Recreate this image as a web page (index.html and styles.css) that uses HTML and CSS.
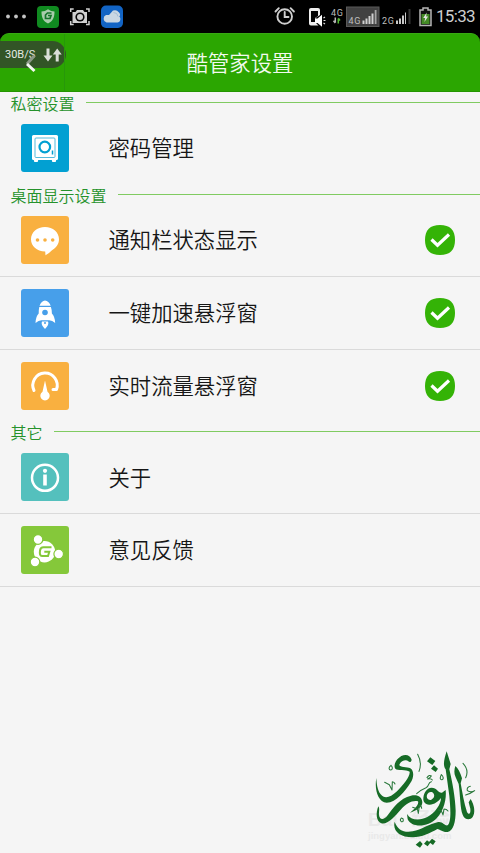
FILE: index.html
```html
<!DOCTYPE html>
<html lang="zh-CN">
<head>
<meta charset="utf-8">
<title>酷管家设置</title>
<link rel="stylesheet" href="styles.css">
</head>
<body>
<div class="statusbar">
  <svg class="status-icons" width="436" height="33" viewBox="0 0 436 33">
    <g fill="#c4c4c4"><circle cx="8" cy="16.5" r="1.9"/><circle cx="16" cy="16.5" r="1.9"/><circle cx="24" cy="16.5" r="1.9"/></g>
    <rect x="37" y="6" width="22" height="22" rx="4" fill="#108a20"/>
    <path d="M41.5 11.5q3.500 0 6.500-2.200q3 2.200 6.500 2.200c0 6-1.500 9.500-6.500 12c-5-2.500-6.500-6-6.500-12z" fill="#a8ccab"/>
    <path d="M51.500 13h-4l-2 2v3.500h4.500l1-3h-3" fill="none" stroke="#14742a" stroke-width="1.700"/>
    <g fill="none" stroke="#d0d0d0" stroke-width="1.500">
      <path d="M70.700 12V9h3M86 9h3v3M70.700 21v3.500h3M86 24.500h3V21"/>
    </g>
    <path d="M72.500 12h3l1.500-2h6l1.500 2h2.500v11H72.500z" fill="#d0d0d0"/>
    <circle cx="80" cy="17" r="4.600" fill="#080808"/><circle cx="80" cy="17" r="3" fill="#d0d0d0"/>
    <rect x="101" y="5.500" width="22" height="22.500" rx="5" fill="#1264c4"/>
    <path d="M106.500 22.500a4 4 0 0 1-.5-7.500h3l4-4.500q4-1 5.500 1.500c2.500 2 1.500 4 .8 4.500c2 2 1 6-1.800 6z" fill="#c9d7e3"/>
    <path d="M113.500 12.500q4 0 4.500 4" fill="none" stroke="#a3bdd4"/>
    <g fill="none" stroke="#cfcfcf" stroke-width="1.900" stroke-linecap="round">
      <circle cx="284.700" cy="16.500" r="7.300"/><path d="M284.700 12v5h3.800M275.500 11.500l3.300-3.300M293.900 11.500l-3.300-3.300"/>
    </g>
    <path d="M311 8h7q2 0 2 2v5l-4.500 3v4.500l3 3H311q-2 0-2-2V10q0-2 2-2z" fill="#eee"/>
    <path d="M311 11h7v5l-3 2v4h-4z" fill="#050505"/>
    <path d="M315 18.500h2.500l4.500-3.800v12l-4.500-3.700H315z" fill="#fff"/>
    <path d="M323.500 18l1.500-1M323.500 20.500h2M323.500 23l1.500 1" stroke="#ddd" stroke-width="1.200"/>
    <text class="net-label" x="331" y="15.500" textLength="12">4G</text>
    <path d="M335.300 17.500v5M333.500 20.800l1.800 2.200" stroke="#b8b8b8" stroke-width="1.500"/>
    <path d="M338.300 23.500v-5M340 20.500l-1.700-2.200" stroke="#56bd34" stroke-width="1.500"/>
    <rect x="346.500" y="7" width="32.500" height="19.500" fill="#414141" stroke="#5a5a5a"/>
    <text class="net-label" x="348.500" y="24" textLength="12">4G</text>
    <g fill="#d0d0d0"><path d="M362.500 20.500h2V24h-2zM365.500 18.500h2V24h-2zM368.500 16h2v8h-2zM371.500 13.500h2V24h-2z"/><path d="M374.700 10h1.800v14h-1.800z" opacity=".7"/></g>
    <text class="net-label" x="382" y="24" textLength="12">2G</text>
    <g fill="#c8c8c8"><path d="M396 20.500h2V24h-2zM399 18.500h2V24h-2zM402 15.500h2V24h-2z"/><path d="M405 12.500h1V24h-1z"/><path d="M408.500 9h2v15h-2z" fill="#343434"/></g>
    <path d="M423 10V8h5v2h3v15.500h-11V10z" fill="#101010" stroke="#b5b5b5" stroke-width="1.500"/>
    <path d="M421.500 14h8v10h-8z" fill="#438a25"/>
    <path d="M426.700 12.500l-3.500 5.500h2l-.8 4l3.700-5.500h-2z" fill="#e4e4e4"/>
  </svg>
  <span class="clock">15:33</span>
</div>

<header class="header">
  <h1 class="title">酷管家设置</h1>
  <svg class="back" width="12" height="20" viewBox="0 0 12 20"><path d="M9.500 1.500L2 10" stroke="#8b9886"/><path d="M2 10l7.500 7" stroke="#f4f8f2"/></svg>
  <div class="speed">
    <span class="speed-value">30B/S</span>
    <svg width="20" height="14" viewBox="0 0 20 14" fill="#dadfd8"><path d="M3.500 .5h3v7h3L5 13.500L.5 7.500h3zM12.700 13.500h3v-7h3L14.200.5L9.800 6.500h2.900z"/></svg>
  </div>
</header>

<main class="settings">
  <h2 class="section">私密设置</h2>
  <div class="row row-last">
    <svg class="tile tile-safe" viewBox="0 0 48 48">
      <rect x="11" y="11" width="26" height="25" rx="1.500" fill="#fff"/><path d="M12.500 35h5l-.8 3h-3.400zM30.500 35h5l-.8 3h-3.400z" fill="#fff"/>
      <rect x="14" y="14" width="20" height="19.500" rx="1" fill="none" stroke="#55bbdd" stroke-width="1"/>
      <circle cx="23.800" cy="23" r="5.300" fill="none" stroke="#02a0d2" stroke-width="2.200"/><path d="M31.500 26.500v4" stroke="#02a0d2" stroke-width="1.500"/>
    </svg>
    <span class="label">密码管理</span>
  </div>

  <h2 class="section">桌面显示设置</h2>
  <div class="row">
    <svg class="tile tile-orange" viewBox="0 0 48 48">
      <path d="M24 11c8 0 14 5.300 14 12.300c0 5-3 8.700-7 11q-3 3.200-6.500 5l-.3-3.800C15.500 35.500 10 30 10 23.300C10 16.300 16 11 24 11z" fill="#fff"/>
      <g fill="#f9b040"><circle cx="16.500" cy="24" r="1.800"/><circle cx="24" cy="24" r="1.800"/><circle cx="31.700" cy="24" r="1.800"/></g>
    </svg>
    <span class="label">通知栏状态显示</span>
    <svg class="check" viewBox="0 0 32 32"><path class="check-bg" d="M16 1C26 1 31 6 31 16S26 31 16 31S1 26 1 16S6 1 16 1z"/><path class="check-mark" d="M7.500 15.500l6 5.700L25 10.500"/></svg>
  </div>
  <div class="row">
    <svg class="tile tile-blue" viewBox="0 0 48 48">
      <path d="M18.500 16.800q2-5 5.500-5.300q3.700.3 5.700 5.300zM18.300 18h11.600q1.200 3.500 1 6.500q3 3 3.300 9.500q-3-2.800-6-2.800h-7.700q-3 0-6 2.800q.2-6.500 3.200-9.500q-.2-3 .6-6.500z" fill="#fff"/>
      <circle cx="24" cy="23.500" r="2.800" fill="#479fea"/><path d="M21 32.500h6q1.500 3-3 7.500q-4.500-4.500-3-7.500z" fill="#fff"/><circle cx="24" cy="34" r="1" fill="#479fea"/>
    </svg>
    <span class="label">一键加速悬浮窗</span>
    <svg class="check" viewBox="0 0 32 32"><path class="check-bg" d="M16 1C26 1 31 6 31 16S26 31 16 31S1 26 1 16S6 1 16 1z"/><path class="check-mark" d="M7.500 15.500l6 5.700L25 10.500"/></svg>
  </div>
  <div class="row row-last">
    <svg class="tile tile-orange" viewBox="0 0 48 48">
      <path d="M13 28.500A12.200 12.200 0 1 1 35.500 27.500H32" fill="none" stroke="#fff" stroke-width="3" stroke-linecap="round" stroke-linejoin="round"/>
      <path d="M24 18.500l2.500 11.200a4.700 4.700 0 1 1-5 0z" fill="#fff"/>
    </svg>
    <span class="label">实时流量悬浮窗</span>
    <svg class="check" viewBox="0 0 32 32"><path class="check-bg" d="M16 1C26 1 31 6 31 16S26 31 16 31S1 26 1 16S6 1 16 1z"/><path class="check-mark" d="M7.500 15.500l6 5.700L25 10.500"/></svg>
  </div>

  <h2 class="section section-other">其它</h2>
  <div class="row row-about">
    <svg class="tile tile-teal" viewBox="0 0 48 48">
      <circle cx="24" cy="24.800" r="13" fill="none" stroke="#fff" stroke-width="2.500"/><circle cx="24" cy="17.800" r="2.100" fill="#fff"/><path d="M22.200 21.500h3.600v11h-3.600z" fill="#fff"/>
    </svg>
    <span class="label">关于</span>
  </div>
  <div class="row">
    <svg class="tile tile-green" viewBox="0 0 48 48">
      <circle cx="23.500" cy="25.800" r="10.700" fill="#fff"/>
      <g fill="#fff" stroke="#85c83a" stroke-width="1.200"><circle cx="17" cy="13.500" r="4.800"/><circle cx="37.700" cy="28" r="4.800"/><circle cx="14" cy="36" r="4.800"/></g>
      <path d="M30.500 21.300h-8q-3 0-3.500 3.200q-.8 5.500 2 5.500h6l1.300-4.200h-5" fill="none" stroke="#85c83a" stroke-width="2"/>
    </svg>
    <span class="label">意见反馈</span>
  </div>
</main>

<div class="stamp">
  <div class="watermark"><span class="wm-name">Bai<span class="wm-gap"></span>经验</span><span class="wm-url">jingyan.baidu.com</span></div>
  <svg class="emblem" width="120" height="113" viewBox="0 0 360 339">
    <g fill="#166b26">
      <path d="M155 59C151 45 137 41 124 48C108 57 99 76 106 86C112 93 138 87 149 95C151 110 129 136 111 154C90 174 73 177 62 163C52 150 50 132 49 114C43 146 53 186 80 188C109 188 135 153 151 129C163 112 162 91 151 85C142 80 119 82 118 75C120 64 138 56 145 64C150 69 154 65 155 59z"/>
      <path d="M55 199C47 219 48 244 64 250C82 255 105 229 122 209C139 190 158 180 174 184C178 193 164 207 150 218C166 213 187 203 187 187C186 170 172 163 153 167C120 174 98 205 83 226C71 242 59 240 57 226C56 215 60 207 55 199z"/>
      <path fill-rule="evenodd" d="M190 180C189 160 200 143 215 143C231 143 235 160 246 158L257 150C260 177 252 211 230 235C203 263 155 264 143 238L141 222C152 241 179 243 202 231C225 219 243 193 243 174C235 184 222 195 207 194C198 193 191 188 190 180zM201 165C198 175 206 182 214 179C225 174 225 163 217 157C210 154 204 158 201 165z"/>
      <path d="M260 34L272 72L268 88C277 126 286 173 287 212C287 246 280 272 263 276C248 278 237 266 232 267C213 278 185 292 158 292C118 292 97 272 104 245C113 270 132 279 158 274C185 269 206 253 232 247C247 242 254 259 263 256C275 245 271 200 268 167L257 88C248 76 252 59 260 34z"/>
      <path d="M286 78C294 84 301 98 306 115L302 130C307 157 312 190 321 216C326 226 333 222 331 206L326 187L332 177C344 196 346 219 338 231C330 242 313 239 308 224C300 204 301 166 296 132L287 112C281 100 283 88 286 78z"/>
      <path d="M211 52l15 11-9 12-16-11zM222 76l12 10-7 10-14-10zM180 303l8 9-8 11-13-9zM201 301l10 7-8 11-11-8zM216 296l11 8-8 11-12-9z"/>
    </g>
    <g fill="none" stroke="#28783a" stroke-width="3.200" stroke-linecap="round" stroke-linejoin="round">
      <path d="M93 76c-8 5-7 14-1 14s7-9 1-14M244 104c-5 9-4 16 2 15s4-11-2-15M173 43q14 26 4 51M309 70q19 20 8 43"/>
      <path d="M74 127l14 7l8 16l1-25q6 0 8 7M158 202l14 5l3 13l3-24q6 0 7 9M236 210q10 1 13 15l3-18q8 0 12 6"/>
      <path d="M170 161q15-13 28-18c12-5 4-15 16-18M201 113q7-10 13-5q-3 5-11 9q11-3 14 3M124 234q-6 7 0 11q8 2 5-9z"/>
      <path d="M331 139q-12 3-9 13q11 7 22 0M342 153q-11 8-25 12"/>
    </g>
  </svg>
</div>
</body>
</html>
```

FILE: styles.css
```css
* {
  box-sizing: border-box;
}

body {
  position: relative;
  width: 480px;
  height: 853px;
  margin: 0;
  overflow: hidden;
  background: #f5f5f5;
  color: #161616;
  font-family: "Noto Sans CJK SC", sans-serif;
}

.statusbar {
  position: relative;
  z-index: 1;
  display: flex;
  align-items: center;
  height: 33px;
  background: #000;
}

.status-icons {
  flex: none;
}

.net-label {
  fill: #bdbdbd;
  font: 9px Roboto, sans-serif;
}

.clock {
  color: #cecece;
  font: 17px/33px Roboto, sans-serif;
  letter-spacing: -0.7px;
}

.header {
  position: relative;
  display: flex;
  align-items: center;
  justify-content: center;
  height: 59px;
  border-top: 1px solid #37a913;
  border-bottom: 1px solid #249500;
  border-radius: 9px 9px 0 0;
  background: #2ba601;
  box-shadow: 0 -10px 0 #000;
}

.title {
  margin: 0 0 1px;
  color: #f2faef;
  font-size: 21.3px;
  font-weight: 350;
  line-height: 32px;
}

.header::after {
  content: "";
  position: absolute;
  top: 0;
  left: 64px;
  width: 1px;
  height: 57px;
  background: #27980a;
}

.speed {
  position: absolute;
  top: 7px;
  left: 0;
  display: flex;
  align-items: center;
  gap: 8px;
  width: 66px;
  height: 27px;
  padding-left: 5px;
  border-radius: 0 14px 14px 0;
  background: rgba(53, 67, 46, 0.82);
}

.speed-value {
  width: 30px;
  color: #e4e9e2;
  font: 11px Roboto, sans-serif;
  white-space: nowrap;
}

.back {
  position: absolute;
  top: 20px;
  left: 25px;
  z-index: 1;
  fill: none;
  stroke-width: 3;
}

.section {
  display: flex;
  align-items: center;
  gap: 11px;
  height: 20px;
  margin: 0;
  padding: 2px 0 0 10.5px;
  color: #25922b;
  font-size: 16px;
  font-weight: 350;
  line-height: 18px;
}

.section-other {
  padding-top: 0;
}

.section::after {
  content: "";
  flex: 1;
  height: 1px;
  margin-bottom: 2px;
  background: #80cb61;
}

.row {
  display: flex;
  align-items: center;
  height: 73px;
  padding: 0 24px 0 21px;
  border-bottom: 1px solid #dadada;
}

.row-last {
  height: 72px;
  border-bottom: 0;
}

.row-about {
  height: 72px;
}

.tile {
  flex: none;
  width: 48px;
  height: 48px;
  margin: 0 39.5px 1px 0;
  border-radius: 3px;
}

.tile-safe { background: #02a0d2; }
.tile-orange { background: #f9b040; }
.tile-blue { background: #479fea; }
.tile-teal { background: #54c0bd; }
.tile-green { background: #85c83a; }

.label {
  flex: 1;
  margin-bottom: 2px;
  font-size: 21.35px;
  font-weight: 350;
  line-height: 32px;
}

.check {
  width: 32px;
  height: 32px;
}

.check-bg {
  fill: #34b306;
}

.check-mark {
  fill: none;
  stroke: #fff;
  stroke-width: 3.2;
}

.stamp {
  position: absolute;
  left: 360px;
  bottom: 0;
  width: 120px;
  height: 113px;
}

.watermark {
  position: absolute;
  top: 70px;
  left: 8px;
  display: flex;
  flex-direction: column;
  color: #e9e9e9;
  font-family: "Liberation Sans", "Noto Sans CJK SC", sans-serif;
  font-weight: bold;
}

.wm-name {
  font-size: 19px;
  line-height: 20px;
  white-space: nowrap;
}

.wm-gap {
  display: inline-block;
  width: 14px;
}

.wm-url {
  font-size: 9.5px;
  line-height: 12px;
}

.emblem {
  position: absolute;
  top: 0;
  left: 0;
}
```
